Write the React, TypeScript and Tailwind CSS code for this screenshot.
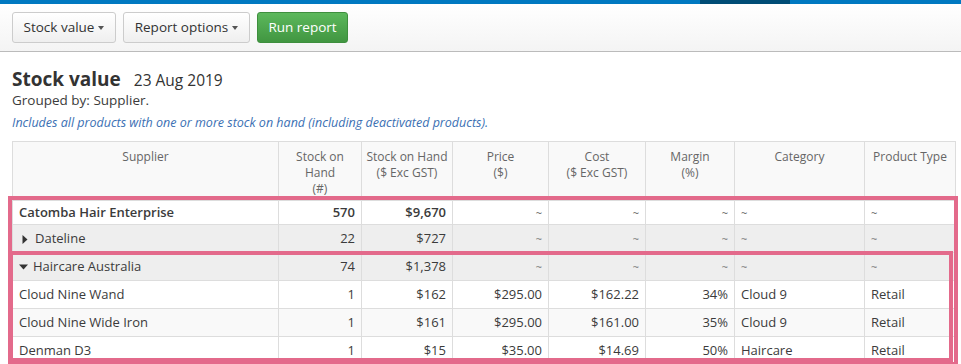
import React from "react";

type Row = {
  name: string;
  qty: string;
  value: string;
  price: string;
  cost: string;
  margin: string;
  category: string;
  type: string;
  kind: "supplier" | "group" | "item";
  open?: boolean;
  bg: string;
};

const rows: Row[] = [
  { name: "Catomba Hair Enterprise", qty: "570", value: "$9,670", price: "~", cost: "~", margin: "~", category: "~", type: "~", kind: "supplier", bg: "bg-white" },
  { name: "Dateline", qty: "22", value: "$727", price: "~", cost: "~", margin: "~", category: "~", type: "~", kind: "group", open: false, bg: "bg-[#eeeeee]" },
  { name: "Haircare Australia", qty: "74", value: "$1,378", price: "~", cost: "~", margin: "~", category: "~", type: "~", kind: "group", open: true, bg: "bg-[#eeeeee]" },
  { name: "Cloud Nine Wand", qty: "1", value: "$162", price: "$295.00", cost: "$162.22", margin: "34%", category: "Cloud 9", type: "Retail", kind: "item", bg: "bg-white" },
  { name: "Cloud Nine Wide Iron", qty: "1", value: "$161", price: "$295.00", cost: "$161.00", margin: "35%", category: "Cloud 9", type: "Retail", kind: "item", bg: "bg-[#f9f9f9]" },
  { name: "Denman D3", qty: "1", value: "$15", price: "$35.00", cost: "$14.69", margin: "50%", category: "Haircare", type: "Retail", kind: "item", bg: "bg-white" },
];

function Caret({ open }: { open?: boolean }) {
  return open ? (
    <svg width="9" height="6" viewBox="0 0 9 6" className="mr-[5px] inline-block align-middle">
      <path d="M0 0.5 L9 0.5 L4.5 5.5 Z" fill="#333" />
    </svg>
  ) : (
    <svg width="6" height="9" viewBox="0 0 6 9" className="ml-[3px] mr-[7px] inline-block align-middle">
      <path d="M0.5 0 L5.5 4.5 L0.5 9 Z" fill="#333" />
    </svg>
  );
}

function Tilde({ v }: { v: string }) {
  if (v === "~") return <span className="text-[#777] text-[11px]">~</span>;
  return <>{v}</>;
}

export default function App() {
  return (
    <div className="w-[961px] h-[364px] overflow-hidden bg-white text-[#3b3b3b] font-['Open_Sans',sans-serif]">
      {/* top bar */}
      <div className="h-[4px] bg-[#0079c1] flex">
        <div className="w-[700px]" />
        <div className="w-[90px] bg-[#004d76]" />
      </div>
      <div className="h-[48px] bg-gradient-to-b from-white to-[#f4f4f4] border-b border-[#bbbbbb] flex items-center gap-[7px] px-[12px]">
        <button className="h-[31px] w-[104px] rounded-[3px] border border-[#cccccc] bg-gradient-to-b from-white to-[#efefef] text-[13.5px] text-[#333] flex items-center justify-center">
          Stock value
          <span className="ml-[4px] border-x-[3.5px] border-x-transparent border-t-[4px] border-t-[#555] w-0 h-0" />
        </button>
        <button className="h-[31px] w-[127px] rounded-[3px] border border-[#cccccc] bg-gradient-to-b from-white to-[#efefef] text-[13.5px] text-[#333] flex items-center justify-center">
          Report options
          <span className="ml-[4px] border-x-[3.5px] border-x-transparent border-t-[4px] border-t-[#555] w-0 h-0" />
        </button>
        <button className="h-[31px] w-[91px] rounded-[3px] border border-[#3e8f3e] bg-gradient-to-b from-[#5cb85c] to-[#419641] text-[13.5px] text-white">
          Run report
        </button>
      </div>

      <div className="px-[12px] pt-[15px]">
        <div className="flex items-baseline gap-[13px] leading-[24px]">
          <h1 className="text-[19px] font-bold text-[#333]">Stock value</h1>
          <span className="text-[15.5px] text-[#333]">23 Aug 2019</span>
        </div>
        <div className="text-[13.5px] leading-[17px]">Grouped by: Supplier.</div>
        <div className="text-[12.5px] italic text-[#3a6fb3] mt-[6px] leading-[16px]">
          Includes all products with one or more stock on hand (including deactivated products).
        </div>

        <div className="relative mt-[10px]">
          <table className="border-collapse text-[13px] table-fixed w-[943px]">
            <colgroup>
              <col className="w-[266px]" />
              <col className="w-[83px]" />
              <col className="w-[91px]" />
              <col className="w-[96px]" />
              <col className="w-[97px]" />
              <col className="w-[89px]" />
              <col className="w-[130px]" />
              <col className="w-[91px]" />
            </colgroup>
            <thead>
              <tr className="bg-[#f9f9f9] text-[#666] text-[12px] leading-[16px] align-top h-[59px]">
                <th className="font-normal border border-[#dddddd] pt-[7px]">Supplier</th>
                <th className="font-normal border border-[#dddddd] pt-[7px]">Stock on<br />Hand<br />(#)</th>
                <th className="font-normal border border-[#dddddd] pt-[7px]">Stock on Hand<br />($ Exc GST)</th>
                <th className="font-normal border border-[#dddddd] pt-[7px]">Price<br />($)</th>
                <th className="font-normal border border-[#dddddd] pt-[7px]">Cost<br />($ Exc GST)</th>
                <th className="font-normal border border-[#dddddd] pt-[7px]">Margin<br />(%)</th>
                <th className="font-normal border border-[#dddddd] pt-[7px]">Category</th>
                <th className="font-normal border border-[#dddddd] pt-[7px]">Product Type</th>
              </tr>
            </thead>
            <tbody>
              {rows.map((r) => (
                <tr
                  key={r.name}
                  className={`${r.bg} ${r.kind === "supplier" ? "font-semibold h-[24px]" : "h-[28px]"}`}
                >
                  <td className="border border-[#dddddd] px-[6px] whitespace-nowrap">
                    {r.kind === "group" && <Caret open={r.open} />}
                    {r.name}
                  </td>
                  <td className="border border-[#dddddd] px-[6px] text-right">{r.qty}</td>
                  <td className="border border-[#dddddd] px-[6px] text-right">{r.value}</td>
                  <td className="border border-[#dddddd] px-[6px] text-right"><Tilde v={r.price} /></td>
                  <td className="border border-[#dddddd] px-[6px] text-right"><Tilde v={r.cost} /></td>
                  <td className="border border-[#dddddd] px-[6px] text-right"><Tilde v={r.margin} /></td>
                  <td className="border border-[#dddddd] px-[6px] text-left"><Tilde v={r.category} /></td>
                  <td className="border border-[#dddddd] px-[6px] text-left"><Tilde v={r.type} /></td>
                </tr>
              ))}
            </tbody>
          </table>
          {/* highlight outlines */}
          <div className="absolute left-[-4px] top-[55px] w-[950px] h-[170px] border-[4px] border-[#e36a8b] pointer-events-none" />
          <div className="absolute left-[-3px] top-[110px] w-[944px] h-[111px] border-[4px] border-[#e36a8b] pointer-events-none" />
        </div>
      </div>
    </div>
  );
}
